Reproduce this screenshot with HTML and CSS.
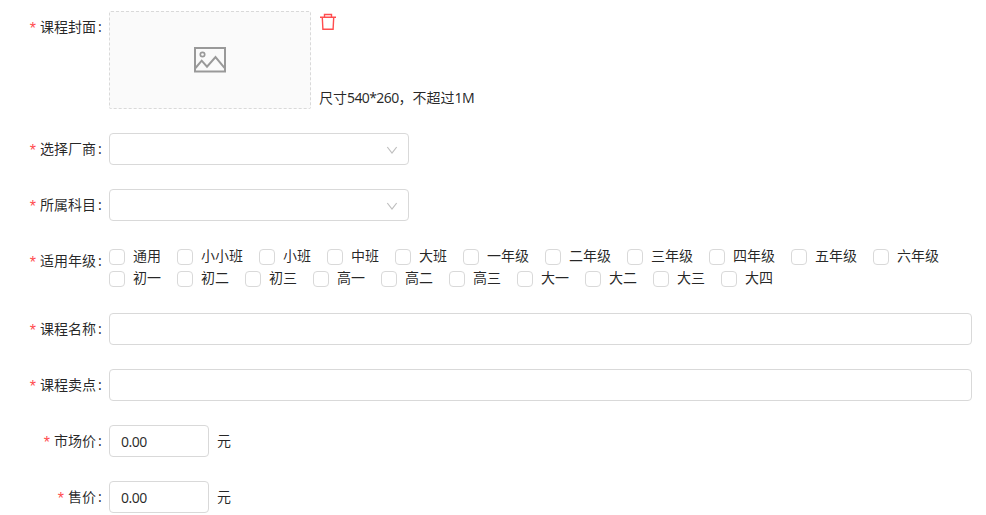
FILE: index.html
```html
<!DOCTYPE html>
<html lang="zh-CN">
<head>
<meta charset="utf-8">
<title>课程</title>
<link rel="stylesheet" href="styles.css">
</head>
<body>
<form class="form">
  <div class="row cover-row">
    <div class="label"><i>*</i><span>课程封面</span><b>:</b></div>
    <div class="cover">
      <svg width="32" height="26" viewBox="0 0 32 26" fill="none" stroke="#999" stroke-width="2"><path d="M1 1h30v23.500H1z"/><circle cx="8.500" cy="7.500" r="2.200" stroke-width="1.700"/><path d="M1.500 21l6.200-7.300 5.300 6L21.500 10l9 10.800"/></svg>
    </div>
    <div class="cover-side">
      <svg class="trash" width="16" height="18" viewBox="0 0 16 18" fill="none" stroke="#ff4d4f" stroke-width="1.400"><path d="M0 4.200h16M4.500 4V1.500h7V4M2.300 4.500l.6 11.800h10.200l.6-11.800"/></svg>
      <span class="hint">尺寸<span class="num">540*260</span>，不超过<span class="num">1M</span></span>
    </div>
  </div>
  <div class="row">
    <div class="label"><i>*</i><span>选择厂商</span><b>:</b></div>
    <div class="box select"><svg width="12" height="12" viewBox="0 0 12 12" fill="none" stroke="#bfbfbf" stroke-width="1.200"><path d="M1.300 3L6 9l4.700-6"/></svg></div>
  </div>
  <div class="row">
    <div class="label"><i>*</i><span>所属科目</span><b>:</b></div>
    <div class="box select"><svg width="12" height="12" viewBox="0 0 12 12" fill="none" stroke="#bfbfbf" stroke-width="1.200"><path d="M1.300 3L6 9l4.700-6"/></svg></div>
  </div>
  <div class="row grades-row">
    <div class="label"><i>*</i><span>适用年级</span><b>:</b></div>
    <div class="grades">
      <label><s></s>通用</label><label><s></s>小小班</label><label><s></s>小班</label><label><s></s>中班</label><label><s></s>大班</label><label><s></s>一年级</label><label><s></s>二年级</label><label><s></s>三年级</label><label><s></s>四年级</label><label><s></s>五年级</label><label><s></s>六年级</label><label><s></s>初一</label><label><s></s>初二</label><label><s></s>初三</label><label><s></s>高一</label><label><s></s>高二</label><label><s></s>高三</label><label><s></s>大一</label><label><s></s>大二</label><label><s></s>大三</label><label><s></s>大四</label>
    </div>
  </div>
  <div class="row">
    <div class="label"><i>*</i><span>课程名称</span><b>:</b></div>
    <div class="box wide"></div>
  </div>
  <div class="row">
    <div class="label"><i>*</i><span>课程卖点</span><b>:</b></div>
    <div class="box wide"></div>
  </div>
  <div class="row">
    <div class="label"><i>*</i><span>市场价</span><b>:</b></div>
    <div class="box price">0.00</div><span class="unit">元</span>
  </div>
  <div class="row">
    <div class="label"><i>*</i><span>售价</span><b>:</b></div>
    <div class="box price">0.00</div><span class="unit">元</span>
  </div>
</form>
</body>
</html>
```

FILE: styles.css
```css
* { box-sizing: border-box; }
body { margin: 0; background: #fff; color: rgba(0,0,0,.85); font: 14px/22px "Noto Sans", "Noto Sans CJK SC", sans-serif; overflow: hidden; }
.form { padding-top: 11px; }
.row { display: flex; height: 32px; margin-bottom: 24px; white-space: nowrap; }
.cover-row { height: 98px; }
.grades-row { height: 44px; }
.label { width: 109px; height: 32px; flex: none; display: flex; justify-content: flex-end; line-height: 32px; padding-right: 7px; }
.label i { color: #ff4d4f; font: 16px/36px "Liberation Sans", sans-serif; margin-right: 4px; }
.label b { font-weight: 400; width: 6px; padding-left: 2px; }
.cover { width: 202px; height: 98px; border: 1px dashed #d9d9d9; border-radius: 2px; background: #fafafa; display: flex; align-items: center; justify-content: center; }
.cover-side { margin-left: 8px; display: flex; flex-direction: column; justify-content: space-between; }
.trash { margin: 2px 0 0 1px; }
.num { letter-spacing: -.6px; }
.box { height: 32px; border: 1px solid #d9d9d9; border-radius: 4px; background: #fff; }
.select { width: 300px; display: flex; align-items: center; justify-content: flex-end; padding: 1px 10px 0 0; }
.wide { width: 863px; }
.price { width: 100px; padding-left: 11px; line-height: 32px; letter-spacing: -.5px; }
.unit { margin-left: 8px; line-height: 32px; }
.grades { width: 863px; display: flex; flex-wrap: wrap; align-content: flex-start; }
.grades label { display: flex; height: 22px; margin-right: 16px; }
.grades s { width: 16px; height: 16px; margin: 4px 8px 0 0; border: 1px solid #d9d9d9; border-radius: 4px; }
```
